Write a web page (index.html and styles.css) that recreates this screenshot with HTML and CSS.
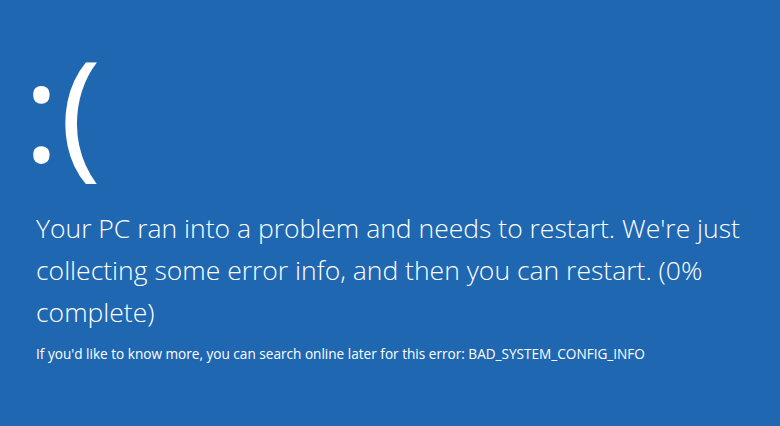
FILE: index.html
```html
<!DOCTYPE html>
<html>
<head>
<meta charset="utf-8">
<link rel="stylesheet" href="styles.css">
</head>
<body>
<main class="bsod">
  <div class="face">:(</div>
  <p class="message">Your PC ran into a problem and needs to restart. We're just collecting some error info, and then you can restart. (0% complete)</p>
  <p class="details">If you'd like to know more, you can search online later for this error: BAD_SYSTEM_CONFIG_INFO</p>
</main>
</body>
</html>
```
FILE: styles.css
```css
html, body {
  margin: 0;
  height: 100%;
  background: #2067b2;
}
.bsod {
  padding: 33px 0 0 30px;
  color: #ffffff;
  font-family: "Open Sans", "Liberation Sans", sans-serif;
  font-weight: 300;
}
.face {
  font-size: 140px;
  font-weight: 400;
  line-height: 150px;
  height: 174px;
  margin-left: -7px;
  letter-spacing: 0;
}
.message {
  margin: 0;
  width: 730px;
  font-size: 26.5px;
  line-height: 42px;
  padding-left: 6px;
}
.details {
  margin: 11px 0 0;
  padding-left: 6px;
  font-size: 13.6px;
  font-weight: 400;
}
```
